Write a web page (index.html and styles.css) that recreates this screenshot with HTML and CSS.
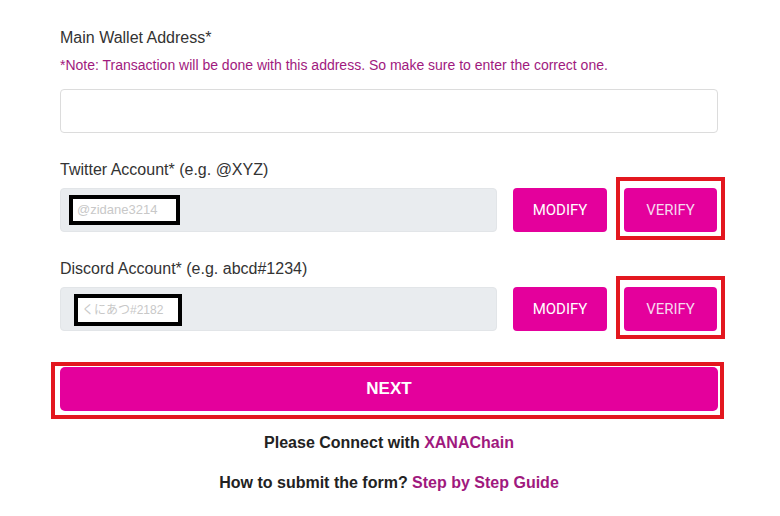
FILE: index.html
```html
<!DOCTYPE html>
<html lang="en">
<head>
  <meta charset="UTF-8">
  <meta name="viewport" content="width=device-width, initial-scale=1.0">
  <title>Registration Form</title>
  <link rel="stylesheet" href="styles.css">
</head>
<body>
  <main class="form">
    <div class="field">
      <label class="label">Main Wallet Address*</label>
      <p class="note">*Note: Transaction will be done with this address. So make sure to enter the correct one.</p>
      <div class="input wallet"></div>
    </div>

    <div class="field">
      <label class="label">Twitter Account* (e.g. @XYZ)</label>
      <div class="row">
        <div class="input filled">
          <span class="redact">@zidane3214</span>
        </div>
        <button class="btn">MODIFY</button>
        <button class="btn marked">VERIFY</button>
      </div>
    </div>

    <div class="field">
      <label class="label">Discord Account* (e.g. abcd#1234)</label>
      <div class="row">
        <div class="input filled">
          <span class="redact second">くにあつ#2182</span>
        </div>
        <button class="btn">MODIFY</button>
        <button class="btn marked">VERIFY</button>
      </div>
    </div>

    <button class="next">NEXT</button>

    <p class="info">Please Connect with <a href="#">XANAChain</a></p>
    <p class="info guide">How to submit the form? <a href="#">Step by Step Guide</a></p>
  </main>
</body>
</html>
```

FILE: styles.css
```css
body {
  margin: 0;
  background: #fff;
  font-family: "Liberation Sans", Arial, sans-serif;
  color: #333;
}
.form {
  width: 658px;
  margin-left: 60px;
  padding-top: 28px;
}
.field {
  margin-bottom: 27px;
}
.label {
  display: block;
  font-size: 16px;
  line-height: 20px;
  color: #333;
}
.note {
  margin: 8px 0 15px;
  font-size: 14px;
  line-height: 18px;
  color: #a0197e;
}
.input {
  box-sizing: border-box;
  height: 44px;
  border: 1px solid #dcdcdc;
  border-radius: 4px;
  background: #fff;
}
.row {
  display: flex;
  align-items: center;
  margin-top: 8px;
}
.row .input {
  flex: 0 0 437px;
  display: flex;
  align-items: center;
  padding-left: 8px;
  background: #e9ecef;
  border-color: #e2e5e8;
}
.redact {
  box-sizing: border-box;
  display: inline-block;
  width: 111px;
  height: 30px;
  padding: 0 4px;
  border: 4px solid #000;
  background: #fff;
  font-size: 13px;
  line-height: 22px;
  color: #c8c8c8;
  font-family: "Liberation Sans", "Noto Sans CJK JP", sans-serif;
}
.redact.second {
  width: 108px;
  height: 32px;
  margin-left: 5px;
  margin-top: 2px;
  line-height: 24px;
  font-size: 12px;
}
.btn {
  box-sizing: border-box;
  height: 44px;
  width: 94px;
  margin-left: 16px;
  border: none;
  border-radius: 4px;
  background: #e4009c;
  color: #fff;
  font-family: Roboto, "Liberation Sans", sans-serif;
  font-size: 15px;
  padding: 0;
  cursor: pointer;
}
.btn.marked {
  width: 93px;
  margin-left: 17px;
  color: #f6d8ee;
  position: relative;
}
.btn.marked::after {
  content: "";
  position: absolute;
  top: -11px;
  bottom: -8px;
  left: -8px;
  right: -8px;
  border: 4px solid #e3171f;
}
.next {
  position: relative;
  display: block;
  width: 100%;
  height: 44px;
  margin-top: 36px;
  border: none;
  border-radius: 5px;
  background: #e4009c;
  color: #fff;
  font-family: "Liberation Sans", Arial, sans-serif;
  font-weight: bold;
  font-size: 17px;
  cursor: pointer;
}
.next::after {
  content: "";
  position: absolute;
  top: -5px;
  bottom: -8px;
  left: -9px;
  right: -6px;
  border: 4px solid #e3171f;
}
.info {
  margin: 23px 0 0;
  text-align: center;
  font-size: 16px;
  line-height: 18px;
  font-weight: bold;
  color: #222;
}
.info.guide {
  margin-top: 22px;
}
.info a {
  color: #a0197e;
  text-decoration: none;
}
```
